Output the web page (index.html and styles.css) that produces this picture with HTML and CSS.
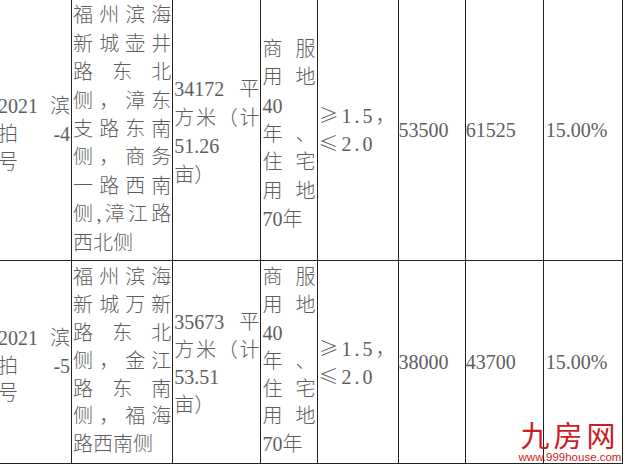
FILE: index.html
```html
<!DOCTYPE html>
<html lang="zh-CN">
<head>
<meta charset="utf-8">
<title>地块出让信息</title>
<link rel="stylesheet" href="styles.css">
</head>
<body>
<table class="land">
  <colgroup>
    <col class="w-no"><col class="w-loc"><col class="w-area"><col class="w-use">
    <col class="w-far"><col class="w-start"><col class="w-cap"><col class="w-pct">
  </colgroup>
  <tbody>
    <tr class="r1">
      <td class="c-no"><div class="ln j">2021 滨</div><div class="ln j">拍 -4</div><div class="ln">号</div></td>
      <td class="c-loc"><div class="ln j">福州滨海</div><div class="ln j">新城壶井</div><div class="ln j">路东北</div><div class="ln j">侧，漳东</div><div class="ln j">支路东南</div><div class="ln j">侧，商务</div><div class="ln j">一路西南</div><div class="ln j">侧,漳江路</div><div class="ln">西北侧</div></td>
      <td class="c-area"><div class="ln j">34172 平</div><div class="ln j">方米（计</div><div class="ln">51.26</div><div class="ln">亩）</div></td>
      <td class="c-use"><div class="ln j">商服</div><div class="ln j">用地</div><div class="ln">40</div><div class="ln j">年、</div><div class="ln j">住宅</div><div class="ln j">用地</div><div class="ln">70年</div></td>
      <td class="c-far"><div class="ln"><span class="sym">≥</span>1.5，</div><div class="ln"><span class="sym">≤</span>2.0</div></td>
      <td class="c-num">53500</td>
      <td class="c-num">61525</td>
      <td class="c-pct">15.00%</td>
    </tr>
    <tr class="r2">
      <td class="c-no"><div class="ln j">2021 滨</div><div class="ln j">拍 -5</div><div class="ln">号</div></td>
      <td class="c-loc"><div class="ln j">福州滨海</div><div class="ln j">新城万新</div><div class="ln j">路东北</div><div class="ln j">侧，金江</div><div class="ln j">路东南</div><div class="ln j">侧，福海</div><div class="ln">路西南侧</div></td>
      <td class="c-area"><div class="ln j">35673 平</div><div class="ln j">方米（计</div><div class="ln">53.51</div><div class="ln">亩）</div></td>
      <td class="c-use"><div class="ln j">商服</div><div class="ln j">用地</div><div class="ln">40</div><div class="ln j">年、</div><div class="ln j">住宅</div><div class="ln j">用地</div><div class="ln">70年</div></td>
      <td class="c-far"><div class="ln"><span class="sym">≥</span>1.5，</div><div class="ln"><span class="sym">≤</span>2.0</div></td>
      <td class="c-num">38000</td>
      <td class="c-num">43700</td>
      <td class="c-pct">15.00%</td>
    </tr>
  </tbody>
</table>
<div class="wm">
  <div class="wm-logo">九房网</div>
  <div class="wm-url">www.999house.com</div>
</div>
</body>
</html>
```

FILE: styles.css
```css
html, body {
  margin: 0;
  padding: 0;
  background: #ffffff;
}

body {
  width: 625px;
  height: 467px;
  overflow: hidden;
}

.land {
  table-layout: fixed;
  width: 628px;
  border-collapse: separate;
  border-spacing: 0;
  border-top: 1px solid #222;
  border-left: 1px solid #222;
  margin: -2.6px 0 0 -5px;
  font-family: "Liberation Serif", "Noto Sans CJK SC", serif;
  font-size: 20px;
  font-weight: 300;
  color: #5e5e5e;
}

.w-no { width: 76px; }
.w-loc { width: 101px; }
.w-area { width: 88px; }
.w-use { width: 57px; }
.w-far { width: 80px; }
.w-start { width: 67px; }
.w-cap { width: 78px; }
.w-pct { width: 79px; }

.land td {
  box-sizing: border-box;
  border-right: 1px solid #222;
  border-bottom: 1px solid #222;
  vertical-align: middle;
  padding: 3px 1px;
  white-space: nowrap;
}

.r1 td { line-height: 28.4px; padding-top: 3px; padding-bottom: 3px; }
.r2 td { line-height: 27.8px; padding-top: 3.5px; padding-bottom: 3.5px; }

.r1 .ln { height: 28.4px; }
.r2 .ln { height: 27.8px; }

.ln {
  display: block;
}

.j {
  text-align: justify;
  text-align-last: justify;
}

.land td.c-no { padding-left: 2px; padding-right: 1px; padding-top: 13px; }
.land td.c-loc { padding-left: 1px; padding-right: 1px; }
.land td.c-area { padding-left: 1px; padding-right: 1px; padding-top: 9px; }
.land td.c-use { padding-left: 1px; padding-right: 2px; }
.land .r1 td.c-use { padding-top: 13px; }
.land td.c-far { padding-left: 0; padding-right: 0; letter-spacing: 3px; }
.land td.c-num { padding-left: 0; padding-right: 0; padding-top: 6px; }
.land td.c-pct { padding-left: 2px; padding-right: 0; padding-top: 6px; }

.sym {
  font-family: "Noto Sans CJK SC", sans-serif;
}

.wm {
  position: absolute;
  left: 518px;
  top: 420px;
  width: 104px;
  text-align: center;
  color: #cc1c24;
}

.wm-logo {
  font-family: "Noto Sans CJK SC", sans-serif;
  font-size: 29px;
  line-height: 29px;
  letter-spacing: 4px;
  font-weight: 400;
}

.wm-url {
  font-family: "Liberation Sans", Arial, sans-serif;
  font-size: 11.5px;
  line-height: 12px;
  margin-top: 2px;
}
```
